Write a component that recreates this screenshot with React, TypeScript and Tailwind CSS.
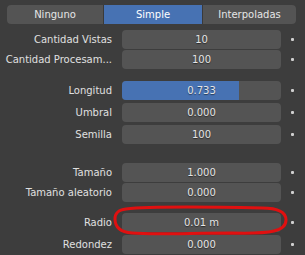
import React from "react";

type Row = {
  label: string;
  value: string;
  fill?: number;
  mt: string;
};

const rows: Row[] = [
  { label: "Cantidad Vistas", value: "10", mt: "mt-[6px]" },
  { label: "Cantidad Procesam...", value: "100", mt: "mt-px" },
  { label: "Longitud", value: "0.733", fill: 0.733, mt: "mt-[12px]" },
  { label: "Umbral", value: "0.000", mt: "mt-[3px]" },
  { label: "Semilla", value: "100", mt: "mt-[3px]" },
  { label: "Tamaño", value: "1.000", mt: "mt-[19px]" },
  { label: "Tamaño aleatorio", value: "0.000", mt: "mt-px" },
  { label: "Radio", value: "0.01 m", mt: "mt-[11px]" },
  { label: "Redondez", value: "0.000", mt: "mt-[3px]" },
];

function Field({ row }: { row: Row }) {
  return (
    <div className={`flex items-center h-[19px] ${row.mt}`}>
      <div className="w-[114px] shrink-0 text-right pr-[2px] text-[#e0e0e0] whitespace-nowrap">
        {row.label}
      </div>
      <div className="relative ml-[8px] w-[159px] h-full rounded-[4px] bg-[#545454] overflow-hidden">
        {row.fill !== undefined && (
          <div
            className="absolute inset-y-0 left-0 bg-[#4772b3]"
            style={{ width: `${row.fill * 100}%` }}
          />
        )}
        <div className="relative h-full flex items-center justify-center text-[#e6e6e6] [text-shadow:0_1px_1px_rgba(0,0,0,0.5)]">
          {row.value}
        </div>
      </div>
      <div className="ml-[10px] w-[3px] h-[3px] rounded-[1px] bg-[#d0d0d0]" />
    </div>
  );
}

export default function App() {
  return (
    <div className="relative w-[305px] h-[255px] overflow-hidden bg-[#3d3d3d] font-['DejaVu_Sans',sans-serif] text-[10px] leading-none">
      <div className="pt-[5px] px-[7px]">
        <div className="grid grid-cols-[96px_98px_93px] gap-px h-[19px] rounded-[4px] overflow-hidden bg-[#3a3a3a] w-[289px]">
          <div className="flex items-center justify-center bg-[#545454] text-[#e6e6e6]">Ninguno</div>
          <div className="flex items-center justify-center bg-[#4772b3] text-[#ffffff]">Simple</div>
          <div className="flex items-center justify-center bg-[#545454] text-[#e6e6e6]">Interpoladas</div>
        </div>
      </div>
      {rows.map((r) => (
        <Field key={r.label} row={r} />
      ))}
      <svg
        className="absolute left-[112px] top-[204px]"
        width="178"
        height="34"
        viewBox="0 0 178 34"
        fill="none"
      >
        <path
          d="M14 5 C40 2 100 3 150 4 C166 4 174 8 174 16 C174 27 160 30 120 29 C80 29 40 31 20 29 C7 28 3 22 3 15 C3 9 6 6 14 5"
          stroke="#e01010"
          strokeWidth="3"
          strokeLinecap="round"
        />
      </svg>
    </div>
  );
}
